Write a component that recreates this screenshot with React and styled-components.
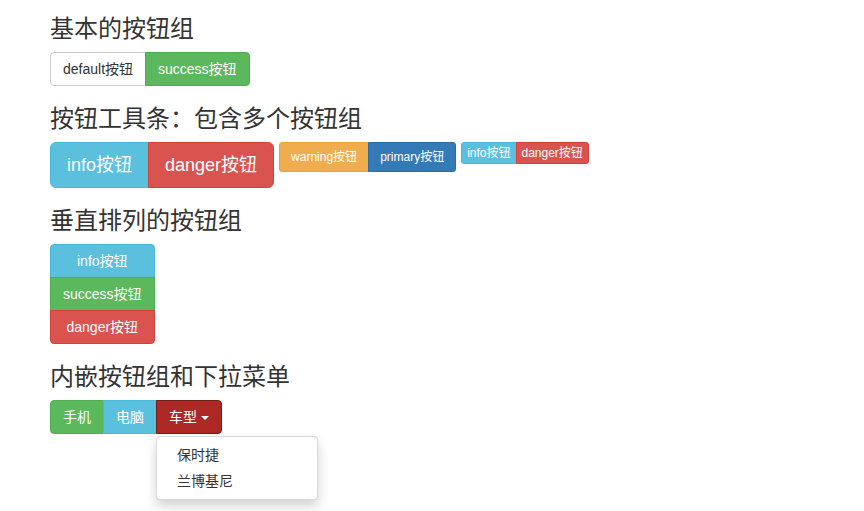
import React from 'react';
import styled, { createGlobalStyle, css } from 'styled-components';

const GlobalStyle = createGlobalStyle`
  html, body {
    margin: 0;
    padding: 0;
    background: #fff;
  }
  body {
    font-family: "Liberation Sans", "Noto Sans CJK SC", sans-serif;
    font-size: 14px;
    line-height: 1.42857;
    color: #333;
  }
`;

const colors = {
  default: { bg: '#fff', border: '#ccc', color: '#333' },
  success: { bg: '#5cb85c', border: '#4cae4c', color: '#fff' },
  info: { bg: '#5bc0de', border: '#46b8da', color: '#fff' },
  danger: { bg: '#d9534f', border: '#d43f3a', color: '#fff' },
  warning: { bg: '#f0ad4e', border: '#eea236', color: '#fff' },
  primary: { bg: '#337ab7', border: '#2e6da4', color: '#fff' },
  dangerActive: { bg: '#ac2925', border: '#761c19', color: '#fff' },
};

const sizes = {
  md: css`padding: 6px 12px; font-size: 14px; line-height: 20px;`,
  lg: css`padding: 10px 16px; font-size: 18px; line-height: 24px;`,
  sm: css`padding: 5px 11px; font-size: 12px; line-height: 18px;`,
  xs: css`padding: 1px 5px; font-size: 12px; line-height: 18px;`,
};

const Page = styled.div`
  min-height: 511px;
  box-sizing: border-box;
  padding: 16px 50px 0;
`;

const Heading = styled.h3`
  margin: 20px 0 10px;
  font-size: 24px;
  font-weight: 400;
  line-height: 26px;
  color: #333;
  &:first-child {
    margin-top: 0;
  }
`;

const Toolbar = styled.div`
  display: flex;
  align-items: flex-start;
  gap: 5px;
`;

const Group = styled.div`
  position: relative;
  display: inline-flex;
  flex-direction: ${({ $vertical }) => ($vertical ? 'column' : 'row')};
  align-items: stretch;
  vertical-align: middle;

  & > button {
    border-radius: 0;
  }
  ${({ $vertical, $r }) =>
    $vertical
      ? css`
          & > button + button { margin-top: -1px; }
          & > button:first-child { border-radius: ${$r}px ${$r}px 0 0; }
          & > button:last-child { border-radius: 0 0 ${$r}px ${$r}px; }
        `
      : css`
          & > button + button, & > button + div { margin-left: -1px; }
          & > button:first-child { border-radius: ${$r}px 0 0 ${$r}px; }
          & > button:last-child, & > div:last-child > button { border-radius: 0 ${$r}px ${$r}px 0; }
        `}
`;

const Btn = styled.button`
  display: block;
  margin: 0;
  font-family: inherit;
  font-weight: 400;
  text-align: center;
  white-space: nowrap;
  cursor: pointer;
  border: 1px solid ${({ $v }) => colors[$v].border};
  background: ${({ $v }) => colors[$v].bg};
  color: ${({ $v }) => colors[$v].color};
  ${({ $s }) => sizes[$s || 'md']}
`;

const Nested = styled.div`
  position: relative;
  display: flex;
`;

const Caret = styled.span`
  display: inline-block;
  width: 0;
  height: 0;
  margin-left: 4px;
  vertical-align: middle;
  border-top: 4px solid #fff;
  border-left: 4px solid transparent;
  border-right: 4px solid transparent;
`;

const Menu = styled.ul`
  position: absolute;
  top: 100%;
  left: 0;
  z-index: 10;
  min-width: 160px;
  margin: 2px 0 0;
  padding: 5px 0;
  list-style: none;
  background: #fff;
  border: 1px solid rgba(0, 0, 0, 0.15);
  border-radius: 4px;
  box-shadow: 0 6px 12px rgba(0, 0, 0, 0.175);
  font-size: 14px;
`;

const MenuItem = styled.li`
  padding: 3px 20px;
  line-height: 20px;
  color: #333;
  white-space: nowrap;
`;

export default function App() {
  return (
    <>
      <GlobalStyle />
      <Page>
        <Heading>基本的按钮组</Heading>
        <Group $r={4}>
          <Btn $v="default">default按钮</Btn>
          <Btn $v="success">success按钮</Btn>
        </Group>

        <Heading>按钮工具条：包含多个按钮组</Heading>
        <Toolbar>
          <Group $r={6}>
            <Btn $v="info" $s="lg">info按钮</Btn>
            <Btn $v="danger" $s="lg">danger按钮</Btn>
          </Group>
          <Group $r={3}>
            <Btn $v="warning" $s="sm">warning按钮</Btn>
            <Btn $v="primary" $s="sm">primary按钮</Btn>
          </Group>
          <Group $r={3}>
            <Btn $v="info" $s="xs">info按钮</Btn>
            <Btn $v="danger" $s="xs">danger按钮</Btn>
          </Group>
        </Toolbar>

        <Heading>垂直排列的按钮组</Heading>
        <Group $vertical $r={4}>
          <Btn $v="info">info按钮</Btn>
          <Btn $v="success">success按钮</Btn>
          <Btn $v="danger">danger按钮</Btn>
        </Group>

        <Heading>内嵌按钮组和下拉菜单</Heading>
        <Group $r={4}>
          <Btn $v="success">手机</Btn>
          <Btn $v="info">电脑</Btn>
          <Nested>
            <Btn $v="dangerActive">
              车型<Caret />
            </Btn>
            <Menu>
              <MenuItem>保时捷</MenuItem>
              <MenuItem>兰博基尼</MenuItem>
            </Menu>
          </Nested>
        </Group>
      </Page>
    </>
  );
}
